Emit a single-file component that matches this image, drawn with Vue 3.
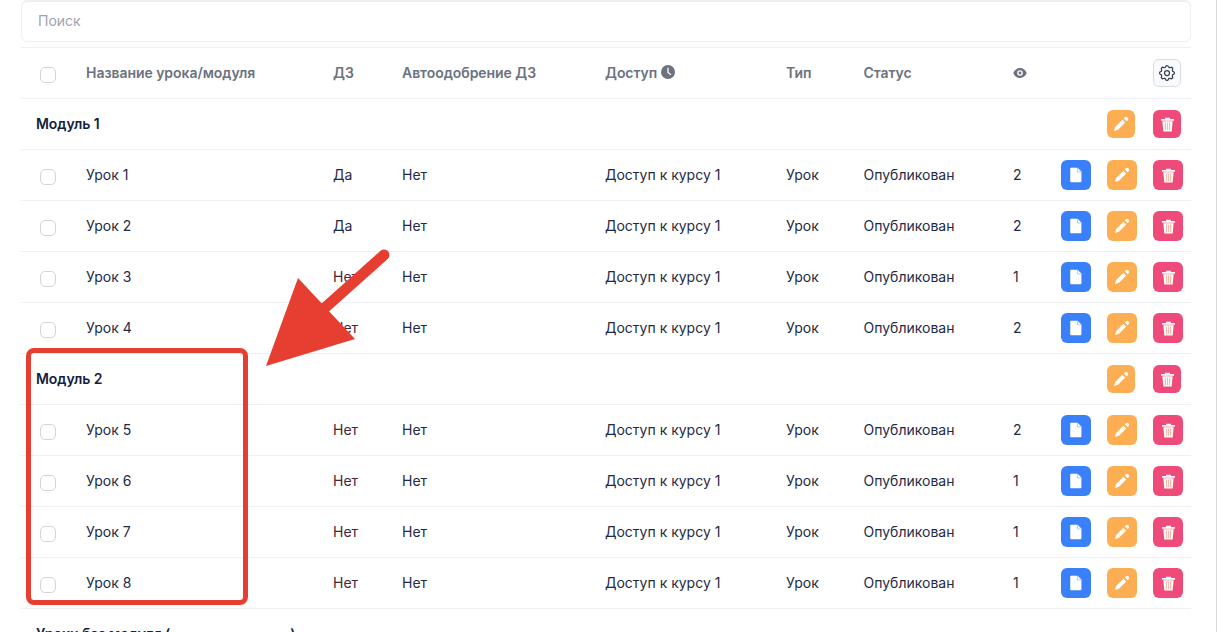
<script setup>
const r = (name, hw, views) => ({ name, hw, views })
const groups = [
  { title: 'Модуль 1', rows: [r('Урок 1', 'Да', 2), r('Урок 2', 'Да', 2), r('Урок 3', 'Нет', 1), r('Урок 4', 'Нет', 2)] },
  { title: 'Модуль 2', rows: [r('Урок 5', 'Нет', 2), r('Урок 6', 'Нет', 1), r('Урок 7', 'Нет', 1), r('Урок 8', 'Нет', 1)] }
]
const pencil = 'M13.59 3.59a2 2 0 1 1 2.82 2.82l-.79.8-2.83-2.83.8-.79zM11.38 5.79 4.2 13 3 17l4-1.2 7.2-7.2-2.82-2.81z'
</script>

<template>
  <div class="page">
    <div class="search">Поиск</div>
    <div class="table">
      <div class="row head">
        <span class="check"></span>
        <span class="c-name">Название урока/модуля</span>
        <span class="c-hw">ДЗ</span>
        <span class="c-auto">Автоодобрение ДЗ</span>
        <span class="c-access">Доступ
          <svg class="clock" viewBox="0 0 14 14" width="14" height="14"><circle cx="7" cy="7" r="7" fill="#6b7280"/><path d="M7 3.2V7.4L9.6 9.4" fill="none" stroke="#fff" stroke-width="1.3" stroke-linecap="round"/></svg>
        </span>
        <span class="c-type">Тип</span>
        <span class="c-status">Статус</span>
        <span class="c-views eye">
          <svg viewBox="0 0 20 20" width="14" height="14" fill="#6b7280"><path d="M10 12a2 2 0 1 0 0-4 2 2 0 0 0 0 4z"/><path fill-rule="evenodd" d="M.46 10C1.73 5.94 5.52 3 10 3s8.27 2.94 9.54 7c-1.27 4.06-5.06 7-9.54 7S1.73 14.06.46 10zM14 10a4 4 0 1 1-8 0 4 4 0 0 1 8 0z"/></svg>
        </span>
        <span class="c-actions">
          <button class="gear">
            <svg viewBox="0 0 24 24" width="20" height="20" fill="none" stroke="#374151" stroke-width="1.5" stroke-linecap="round" stroke-linejoin="round"><path d="M10.33 4.32c.43-1.76 2.92-1.76 3.35 0a1.72 1.72 0 0 0 2.57 1.07c1.54-.94 3.3.82 2.36 2.37a1.72 1.72 0 0 0 1.07 2.56c1.76.43 1.76 2.93 0 3.36a1.72 1.72 0 0 0-1.07 2.56c.94 1.55-.82 3.31-2.36 2.37a1.72 1.72 0 0 0-2.57 1.07c-.43 1.75-2.92 1.75-3.35 0a1.72 1.72 0 0 0-2.57-1.07c-1.54.94-3.3-.82-2.36-2.37a1.72 1.72 0 0 0-1.07-2.56c-1.76-.43-1.76-2.93 0-3.36a1.72 1.72 0 0 0 1.07-2.56c-.94-1.55.82-3.31 2.36-2.37a1.72 1.72 0 0 0 2.57-1.07z"/><circle cx="12" cy="12" r="3"/></svg>
          </button>
        </span>
      </div>
      <template v-for="g in groups" :key="g.title">
        <div class="row module">
          <span class="m-title">{{ g.title }}</span>
          <span class="c-actions">
            <button class="btn small orange"><svg viewBox="0 0 20 20" width="20" height="20" fill="#fff"><path :d="pencil"/></svg></button>
            <button class="btn small red"><svg viewBox="0 0 20 20" width="19" height="19"><path fill="#fff" d="M3.2 4.2h13.6v1.8H3.2zM7.5 3h5v1.4h-5zM4.6 6.6h10.8L14.4 17.4H5.6z"/><path stroke="#f9b9a8" stroke-width="1.2" d="M7.8 8v8M10 8v8M12.2 8v8"/></svg></button>
          </span>
        </div>
        <div v-for="row in g.rows" :key="row.name" class="row lesson">
          <span class="check"></span>
          <span class="c-name">{{ row.name }}</span>
          <span class="c-hw" :class="{ no: row.hw === 'Нет' }">{{ row.hw }}</span>
          <span class="c-auto">Нет</span>
          <span class="c-access">Доступ к курсу 1</span>
          <span class="c-type">Урок</span>
          <span class="c-status">Опубликован</span>
          <span class="c-views">{{ row.views }}</span>
          <span class="c-actions">
            <button class="btn blue"><svg viewBox="0 0 20 20" width="18" height="18"><path fill="#fff" d="M4.6 2h7.2L16 6.2V17a1 1 0 0 1-1 1H4.6a1 1 0 0 1-1-1V3a1 1 0 0 1 1-1z"/><path d="M11.6 2.4v4.2h4.2" fill="none" stroke="#a9c8fd" stroke-width="1"/></svg></button>
            <button class="btn orange"><svg viewBox="0 0 20 20" width="20" height="20" fill="#fff"><path :d="pencil"/></svg></button>
            <button class="btn red"><svg viewBox="0 0 20 20" width="19" height="19"><path fill="#fff" d="M3.2 4.2h13.6v1.8H3.2zM7.5 3h5v1.4h-5zM4.6 6.6h10.8L14.4 17.4H5.6z"/><path stroke="#f9b9a8" stroke-width="1.2" d="M7.8 8v8M10 8v8M12.2 8v8"/></svg></button>
          </span>
        </div>
      </template>
      <div class="row module"><span class="m-title">Уроки без модуля (<span class="blank"></span>)</span></div>
    </div>

    <div class="frame"></div>
    <svg class="arrow" viewBox="0 0 1217 632" width="1217" height="632">
      <path d="M384 255 318 314" stroke="#e63f32" stroke-width="11" stroke-linecap="round" fill="none"/>
      <path d="M298 278 355 339 266 366Z" fill="#e63f32"/>
    </svg>
    <div class="scroll-edge"></div>
  </div>
</template>

<style scoped>
.page {
  position: relative;
  box-sizing: border-box;
  width: 1217px;
  height: 632px;
  padding: 1px 26px 0 21px;
  overflow: hidden;
  background: #fff;
  font-family: Inter, "Noto Sans", sans-serif;
  font-size: 14px;
  color: #1f2a44;
}
.search {
  box-sizing: border-box;
  height: 41px;
  line-height: 38px;
  padding-left: 16px;
  border: 1px solid #eceef2;
  border-radius: 6px;
  box-shadow: 0 -1px 0 #eef0f4;
  color: #9ca3af;
}
.table { margin-top: 5px; border-top: 1px solid #eef0f4; }
.row {
  box-sizing: border-box;
  height: 51px;
  display: flex;
  align-items: center;
  border-bottom: 1px solid #eef0f4;
}
.check {
  box-sizing: border-box;
  width: 16px;
  height: 16px;
  margin: 4px 0 0 19px;
  border: 1px solid #d1d5db;
  border-radius: 5px;
  flex: none;
}
.c-name { margin-left: 30px; width: 247px; flex: none; }
.c-hw { width: 69px; flex: none; }
.c-hw.no { color: #4a2438; }
.c-auto { width: 203px; flex: none; }
.c-access { width: 181px; flex: none; display: flex; align-items: center; gap: 4px; }
.c-type { width: 77.5px; flex: none; }
.c-status { width: 149.5px; flex: none; }
.c-views { width: 48px; flex: none; display: flex; align-items: center; }
.row > span:not(.check, .c-actions, .eye) { margin-bottom: 2px; }
.head { font-weight: 600; color: #6b7280; letter-spacing: -0.05px; }
.c-actions { display: flex; gap: 16px; margin-left: auto; margin-right: 8px; flex: none; }
.btn, .gear {
  padding: 0;
  display: flex;
  align-items: center;
  justify-content: center;
  border: 0;
  border-radius: 6px;
}
.btn { width: 30px; height: 30px; }
.btn.small { width: 28px; height: 28px; }
.module .c-actions { margin-right: 10px; gap: 18px; }
.blue { background: #3a80fb; }
.orange { background: #fdae52; }
.red { background: #ee4b7b; }
.head .c-actions { margin-right: 10px; }
.gear {
  box-sizing: border-box;
  width: 28px;
  height: 28px;
  background: #f9fafb;
  border: 1px solid #d9dce1;
}
.m-title { margin-left: 15px; font-weight: 600; color: #14213d; letter-spacing: -0.05px; }
.blank { display: inline-block; width: 120px; }
.frame {
  position: absolute;
  left: 26px;
  top: 348px;
  width: 222px;
  height: 257px;
  box-sizing: border-box;
  border: 5px solid #e63f32;
  border-radius: 8px;
}
.arrow { position: absolute; left: 0; top: 0; pointer-events: none; }
.scroll-edge {
  position: absolute;
  right: 0;
  top: 0;
  width: 1px;
  height: 100%;
  background: #d9d9d9;
}
</style>
